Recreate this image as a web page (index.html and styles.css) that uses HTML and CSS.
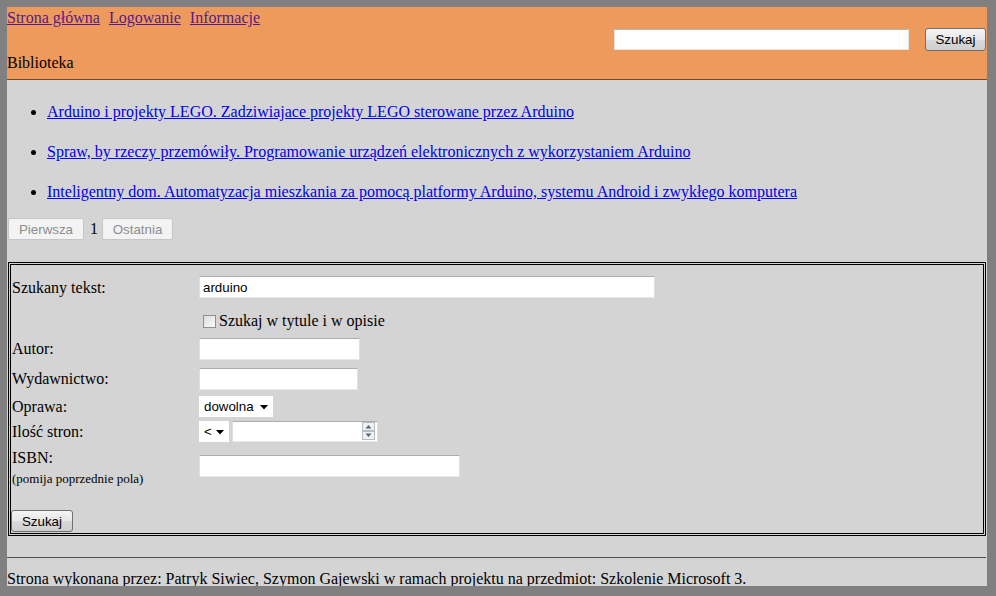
FILE: index.html
```html
<!DOCTYPE html>
<html lang="pl">
<head>
<meta charset="utf-8">
<title>Biblioteka</title>
<link rel="stylesheet" href="styles.css">
</head>
<body>
<div class="page">
  <header class="header">
    <nav class="nav">
      <a href="#" class="nav-link">Strona główna</a>
      <a href="#" class="nav-link">Logowanie</a>
      <a href="#" class="nav-link">Informacje</a>
    </nav>
    <form class="top-search">
      <input type="text" class="top-input">
      <button type="button" class="btn btn-top">Szukaj</button>
    </form>
    <div class="site-title">Biblioteka</div>
  </header>

  <ul class="results">
    <li><a href="#">Arduino i projekty LEGO. Zadziwiajace projekty LEGO sterowane przez Arduino</a></li>
    <li><a href="#">Spraw, by rzeczy przemówiły. Programowanie urządzeń elektronicznych z wykorzystaniem Arduino</a></li>
    <li><a href="#">Inteligentny dom. Automatyzacja mieszkania za pomocą platformy Arduino, systemu Android i zwykłego komputera</a></li>
  </ul>

  <div class="pager">
    <button type="button" class="pbtn pbtn-first" disabled>Pierwsza</button>
    <span class="pnum">1</span>
    <button type="button" class="pbtn pbtn-last" disabled>Ostatnia</button>
  </div>

  <form class="adv">
    <div class="row row1">
      <label class="lbl lbl1">Szukany tekst:</label>
      <input type="text" class="field f-text" value="arduino">
    </div>
    <div class="row row2">
      <span class="lbl"></span>
      <label class="chk"><input type="checkbox" class="cbox"><span>Szukaj w tytule i w opisie</span></label>
    </div>
    <div class="row row3">
      <label class="lbl">Autor:</label>
      <input type="text" class="field f-autor">
    </div>
    <div class="row row4">
      <label class="lbl">Wydawnictwo:</label>
      <input type="text" class="field f-wyd">
    </div>
    <div class="row row5">
      <label class="lbl">Oprawa:</label>
      <span class="sel sel-oprawa">
        <select class="sel-el"><option>dowolna</option></select>
        <svg class="sel-arrow" width="8" height="5" viewBox="0 0 8 5"><path d="M0 0H8L4 4.5Z" fill="#000"/></svg>
      </span>
    </div>
    <div class="row row6">
      <label class="lbl">Ilość stron:</label>
      <span class="sel sel-op">
        <select class="sel-el"><option>&lt;</option></select>
        <svg class="sel-arrow" width="8" height="5" viewBox="0 0 8 5"><path d="M0 0H8L4 4.5Z" fill="#000"/></svg>
      </span>
      <span class="num">
        <input type="text" class="field f-num">
        <svg class="spin" width="13" height="18" viewBox="0 0 13 18">
          <rect x="0.5" y="0.5" width="12" height="8" fill="#eef0f4" stroke="#b8bcc4"/>
          <rect x="0.5" y="9.5" width="12" height="8" fill="#eef0f4" stroke="#b8bcc4"/>
          <path d="M3.5 6.5H9.5L6.5 3Z" fill="#5a6478"/>
          <path d="M3.5 11.5H9.5L6.5 15Z" fill="#5a6478"/>
        </svg>
      </span>
    </div>
    <div class="row row7">
      <div class="lbl lbl-isbn">
        <div>ISBN:</div>
        <div class="small">(pomija poprzednie pola)</div>
      </div>
      <input type="text" class="field f-isbn">
    </div>
    <div class="row row8">
      <button type="button" class="btn btn-submit">Szukaj</button>
    </div>
  </form>

  <hr class="sep">
  <footer class="footer">Strona wykonana przez: Patryk Siwiec, Szymon Gajewski w ramach projektu na przedmiot: Szkolenie Microsoft 3.</footer>
</div>
</body>
</html>
```

FILE: styles.css
```css
html, body {
  margin: 0;
  padding: 0;
}
body {
  background: #808080;
  font-family: "Liberation Serif", "Times New Roman", serif;
  font-size: 16px;
  color: #000;
  height: 596px;
  overflow: hidden;
}
.page {
  margin: 7px 0 0 7px;
  width: 980px;
  height: 579px;
  overflow: hidden;
  background: #d4d4d4;
}
.header {
  background: #ef9a5d;
  border-bottom: 1px solid #6a4a33;
  height: 70px;
  padding-top: 2px;
}
.nav {
  display: flex;
  gap: 9px;
  line-height: 18px;
  height: 18px;
}
.nav-link {
  color: #551a8b;
}
.top-search {
  display: flex;
  justify-content: flex-end;
  align-items: center;
  height: 23px;
  margin: 1px 0 0 0;
  padding-right: 1px;
}
.top-input {
  width: 295px;
  height: 21px;
  box-sizing: border-box;
  margin: 0 16px 0 0;
  border: 1px solid #e3e3e3;
  border-top-color: #b5b5b5;
  background: #fff;
  padding: 0 3px;
  font-family: "Liberation Sans", Arial, sans-serif;
  font-size: 13.33px;
}
.btn {
  font-family: "Liberation Sans", Arial, sans-serif;
  font-size: 13.33px;
  color: #000;
  background: linear-gradient(#f5f5f5, #e6e6e6 50%, #d9d9d9 51%, #cfcfcf);
  border: 1px solid #707070;
  border-radius: 3px;
  padding: 0;
  margin: 0;
  box-sizing: border-box;
}
.btn-top {
  width: 61px;
  height: 23px;
}
.site-title {
  line-height: 18px;
  margin-top: 3px;
}

.results {
  margin: 23px 0 0 0;
  padding: 0 0 0 40px;
  list-style: disc;
  line-height: 18px;
}
.results li {
  margin-bottom: 22px;
}
.results a {
  color: #0000ee;
}

.pager {
  display: flex;
  align-items: center;
  margin-top: -5px;
  padding-left: 1px;
  height: 22px;
}
.pbtn {
  font-family: "Liberation Sans", Arial, sans-serif;
  font-size: 13.33px;
  color: #8d8d8d;
  background: #f3f3f3;
  border: 1px solid #c6c6c6;
  border-radius: 2px;
  height: 22px;
  margin: 0;
  padding: 0;
  box-sizing: border-box;
}
.pbtn-first { width: 76px; }
.pbtn-last { width: 71px; }
.pnum {
  margin: 0 4px 0 6px;
  line-height: 18px;
}

.adv {
  margin: 22px 1px 0 1px;
  border: 3px double #000;
  padding: 11px 0 0 1px;
}
.row {
  display: flex;
  align-items: center;
}
.lbl {
  width: 187px;
  flex: none;
  line-height: 18px;
}
.lbl1 {
  padding-top: 2px;
}
.field {
  box-sizing: border-box;
  height: 22px;
  margin: 0;
  border: 1px solid #e3e9ef;
  border-top-color: #abadb3;
  border-left-color: #dbdfe6;
  border-right-color: #dbdfe6;
  background: #fff;
  padding: 0 3px;
  font-family: "Liberation Sans", Arial, sans-serif;
  font-size: 13.33px;
  color: #000;
}
.row1 { height: 22px; }
.f-text { width: 456px; }
.row2 { height: 20px; margin-top: 13px; }
.chk {
  display: flex;
  align-items: center;
  line-height: 18px;
}
.cbox {
  appearance: none;
  -webkit-appearance: none;
  width: 13px;
  height: 13px;
  margin: 0 3px 0 4px;
  border: 1px solid #8e8f8f;
  background: linear-gradient(135deg, #dcdcdc, #fbfbfb);
  box-sizing: border-box;
}
.row3 { height: 22px; margin-top: 7px; }
.f-autor { width: 161px; }
.row4 { height: 22px; margin-top: 8px; }
.f-wyd { width: 159px; }
.row5 { height: 21px; margin-top: 6px; }
.sel {
  position: relative;
  display: inline-flex;
}
.sel-el {
  appearance: none;
  -webkit-appearance: none;
  height: 21px;
  margin: 0;
  border: 1px solid #fff;
  background: #fff;
  border-radius: 0;
  padding: 0 0 0 4px;
  font-family: "Liberation Sans", Arial, sans-serif;
  font-size: 13.33px;
  color: #000;
  box-sizing: border-box;
}
.sel-oprawa .sel-el { width: 74px; }
.sel-op .sel-el { width: 30px; }
.sel-arrow {
  position: absolute;
  right: 5px;
  top: 9px;
  pointer-events: none;
}
.row6 { height: 21px; margin-top: 4px; }
.num {
  position: relative;
  display: inline-flex;
  margin-left: 3px;
}
.f-num {
  width: 146px;
  height: 21px;
}
.spin {
  position: absolute;
  right: 3px;
  top: 1px;
}
.row7 {
  align-items: flex-start;
  margin-top: 5px;
}
.lbl-isbn {
  line-height: 18px;
  padding-top: 2px;
}
.small {
  font-size: 13px;
  line-height: 15px;
  margin-top: 4px;
}
.f-isbn {
  width: 261px;
  margin-top: 8px;
}
.row8 {
  margin-top: 24px;
  padding-bottom: 1px;
}
.btn-submit {
  width: 62px;
  height: 22px;
  margin-left: -1px;
}

.sep {
  margin: 21px 1px 0 0;
  border: 0;
  border-top: 1px solid #505050;
  height: 0;
}
.footer {
  margin-top: 12px;
  line-height: 18px;
}
```
